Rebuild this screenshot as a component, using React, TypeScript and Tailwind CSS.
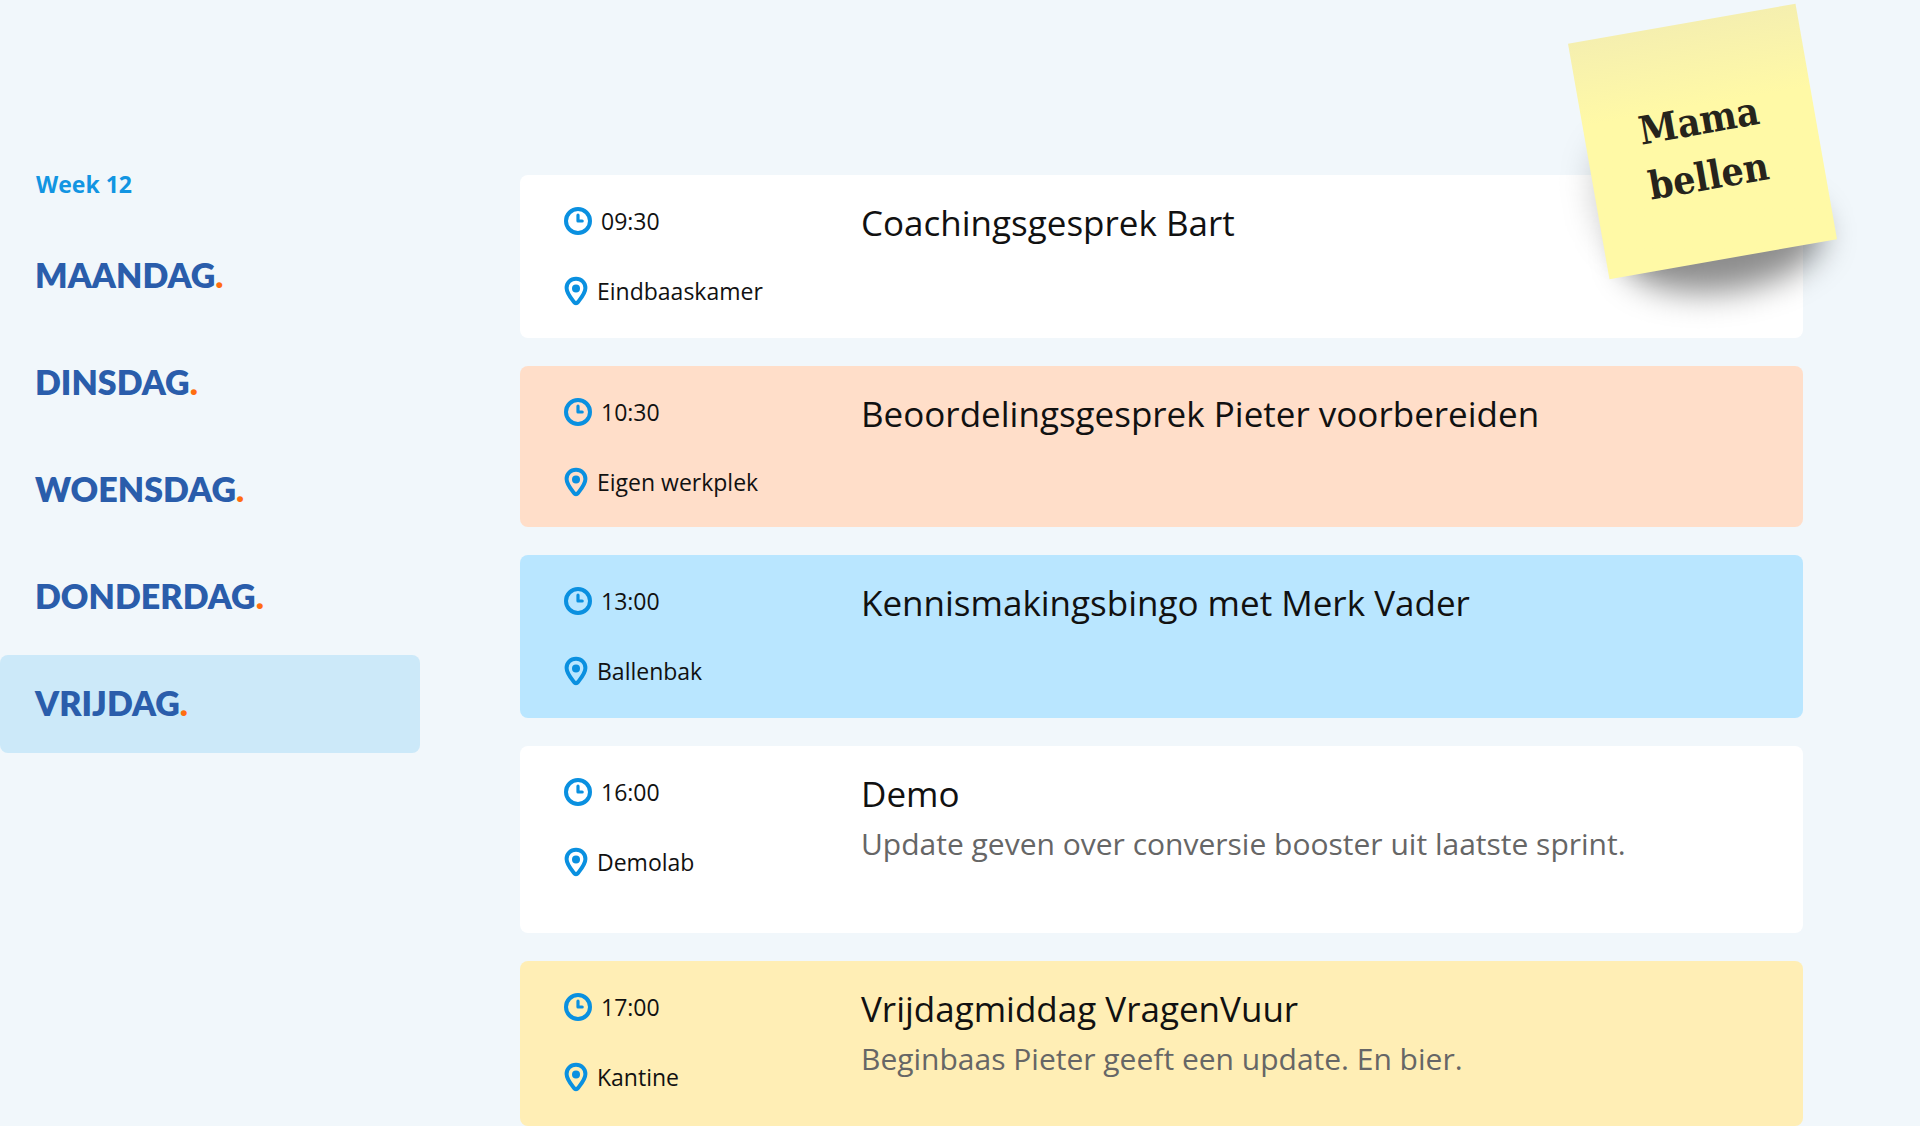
import { useState } from "react";
import clsx from "clsx";

interface Appointment {
  time: string;
  location: string;
  title: string;
  note?: string;
  card: string;
}

const DAYS = ["MAANDAG", "DINSDAG", "WOENSDAG", "DONDERDAG", "VRIJDAG"];

const APPOINTMENTS: Appointment[] = [
  {
    time: "09:30",
    location: "Eindbaaskamer",
    title: "Coachingsgesprek Bart",
    card: "bg-white min-h-[163px]",
  },
  {
    time: "10:30",
    location: "Eigen werkplek",
    title: "Beoordelingsgesprek Pieter voorbereiden",
    card: "bg-[#ffdec9] min-h-[161px]",
  },
  {
    time: "13:00",
    location: "Ballenbak",
    title: "Kennismakingsbingo met Merk Vader",
    card: "bg-[#b9e6ff] min-h-[163px]",
  },
  {
    time: "16:00",
    location: "Demolab",
    title: "Demo",
    note: "Update geven over conversie booster uit laatste sprint.",
    card: "bg-white min-h-[187px]",
  },
  {
    time: "17:00",
    location: "Kantine",
    title: "Vrijdagmiddag VragenVuur",
    note: "Beginbaas Pieter geeft een update. En bier.",
    card: "bg-[#ffeeb5] min-h-[165px]",
  },
];

function ClockIcon() {
  return (
    <svg viewBox="0 0 28 28" className="h-7 w-7 shrink-0 text-[#0a90e0]" fill="none" stroke="currentColor" aria-hidden="true">
      <circle cx="14" cy="14" r="12" strokeWidth="4" />
      <path d="M14 8.2V14H18.2" strokeWidth="3.2" strokeLinecap="round" strokeLinejoin="round" />
    </svg>
  );
}

function PinIcon() {
  return (
    <svg viewBox="0 0 24 30" className="h-[30px] w-6 shrink-0 text-[#0a90e0]" fill="none" aria-hidden="true">
      <path
        d="M12 2.8C6.6 2.8 2.6 6.8 2.6 12c0 5.2 4.2 9.8 7.4 14 1.1 1.5 2.9 1.5 4 0 3.2-4.2 7.4-8.8 7.4-14 0-5.2-4-9.2-9.4-9.2Z"
        stroke="currentColor"
        strokeWidth="4"
        strokeLinejoin="round"
      />
      <circle cx="12" cy="12.5" r="4" fill="currentColor" />
    </svg>
  );
}

function AppointmentCard({ appointment }: { appointment: Appointment }) {
  return (
    <li className={clsx("flex items-start rounded-lg pt-6 pr-6 pl-11", appointment.card)}>
      <div className="flex w-[297px] shrink-0 flex-col gap-[38px] pt-1.5 text-[23px] leading-8">
        <div className="flex items-center gap-[9px]">
          <ClockIcon />
          <time>{appointment.time}</time>
        </div>
        <div className="flex items-center gap-[9px]">
          <PinIcon />
          <span>{appointment.location}</span>
        </div>
      </div>
      <div className="min-w-0 flex-1">
        <h2 className="text-[35px] leading-[48px]">{appointment.title}</h2>
        {appointment.note && (
          <p className="text-3xl leading-[52px] text-[#666666]">{appointment.note}</p>
        )}
      </div>
    </li>
  );
}

function StickyNote() {
  return (
    <aside className="absolute top-[22px] right-[102px] h-[239px] w-[231px] -rotate-10">
      {/* the paper curls, so the shadow is heaviest below the lower edge */}
      <div className="absolute top-24 bottom-4 left-0 w-24 rounded-full bg-black/20 blur-lg" />
      <div className="absolute right-3 -bottom-8 left-4 h-24 rotate-3 rounded-[50%] bg-black/45 blur-lg" />
      <div className="relative flex h-full flex-col items-center justify-center bg-linear-to-b from-[#f5efaf] via-[#fff9a6] via-35% to-[#fff9a6] pt-3">
        <p className="text-center font-['DejaVu_Serif_Condensed','DejaVu_Serif',serif] text-[39px] leading-14 font-bold text-[#26241c]">
          Mama
          <br />
          bellen
        </p>
      </div>
    </aside>
  );
}

export default function App() {
  const [activeDay, setActiveDay] = useState("VRIJDAG");

  return (
    <div className="relative flex min-h-screen items-start bg-[#f1f7fb] font-['Open_Sans',sans-serif] text-[#111111]">
      <nav className="w-[420px] shrink-0 pt-[168px]" aria-label="Week 12">
        <p className="pl-9 text-[23px] leading-8 font-bold text-[#1295e2]">Week 12</p>
        <ul className="mt-[27px] flex flex-col gap-[9px]">
          {DAYS.map((day) => (
            <li key={day}>
              <button
                onClick={() => setActiveDay(day)}
                className={clsx(
                  "h-[98px] w-full rounded-lg pb-1 pl-[35px] text-left font-['Lato',sans-serif] text-[34px] font-extrabold text-[#2a5dab]",
                  day === activeDay && "bg-[#cce9f9]"
                )}
              >
                {day}
                <span className="text-[#ff6d10]">.</span>
              </button>
            </li>
          ))}
        </ul>
      </nav>
      <main className="ml-[100px] min-w-0 flex-1 pt-[175px] pr-[117px]">
        <ul className="flex flex-col gap-7">
          {APPOINTMENTS.map((appointment) => (
            <AppointmentCard key={appointment.time} appointment={appointment} />
          ))}
        </ul>
      </main>
      <StickyNote />
    </div>
  );
}
